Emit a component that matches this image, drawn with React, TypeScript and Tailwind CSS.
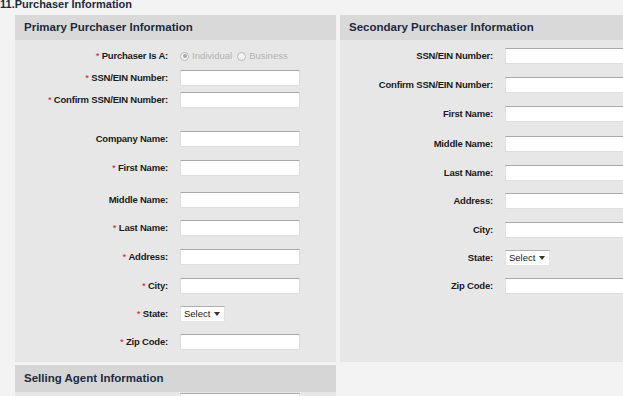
import React from 'react';

type Row = { label: string; req?: boolean; kind?: 'input' | 'select' | 'radio'; mt: string };

const primaryRows: Row[] = [
  { label: 'Purchaser Is A:', req: true, kind: 'radio', mt: 'mt-[5px]' },
  { label: 'SSN/EIN Number:', req: true, mt: 'mt-0' },
  { label: 'Confirm SSN/EIN Number:', req: true, mt: 'mt-0' },
  { label: 'Company Name:', mt: 'mt-[17px]' },
  { label: 'First Name:', req: true, mt: 'mt-[7px]' },
  { label: 'Middle Name:', mt: 'mt-[10px]' },
  { label: 'Last Name:', req: true, mt: 'mt-[6px]' },
  { label: 'Address:', req: true, mt: 'mt-[7px]' },
  { label: 'City:', req: true, mt: 'mt-[7px]' },
  { label: 'State:', req: true, kind: 'select', mt: 'mt-[6px]' },
  { label: 'Zip Code:', req: true, mt: 'mt-[6px]' },
];

const secondaryRows: Row[] = [
  { label: 'SSN/EIN Number:', mt: 'mt-[5px]' },
  { label: 'Confirm SSN/EIN Number:', mt: 'mt-[7px]' },
  { label: 'First Name:', mt: 'mt-[7px]' },
  { label: 'Middle Name:', mt: 'mt-[8px]' },
  { label: 'Last Name:', mt: 'mt-[7px]' },
  { label: 'Address:', mt: 'mt-[6px]' },
  { label: 'City:', mt: 'mt-[7px]' },
  { label: 'State:', kind: 'select', mt: 'mt-[6px]' },
  { label: 'Zip Code:', mt: 'mt-[6px]' },
];

function TextBox() {
  return <div className="h-[16px] w-[120px] shrink-0 bg-white border border-[#dedede] border-t-[#a9a9a9]" />;
}

function SelectBox() {
  return (
    <div className="h-[16px] w-[45px] flex items-center justify-between bg-white border border-[#e2e2e2] border-t-[#b0b0b0] pl-[3px] pr-[4px] text-[9.5px] text-[#222]">
      <span>Select</span>
      <svg width="6" height="4" viewBox="0 0 6 4">
        <path d="M0 0 H6 L3 4 Z" fill="#333" />
      </svg>
    </div>
  );
}

function Radio({ checked }: { checked?: boolean }) {
  return (
    <span className="w-[9px] h-[9px] rounded-full border border-[#b9b9b9] bg-[#f4f4f4] flex items-center justify-center">
      {checked && <span className="w-[4px] h-[4px] rounded-full bg-[#a8a8a8]" />}
    </span>
  );
}

function FormRow({ row }: { row: Row }) {
  return (
    <div className={`flex items-center h-[22px] ${row.mt}`}>
      <div className="w-[153px] shrink-0 text-right text-[9.5px] font-bold tracking-[-0.2px] text-[#1b1b1b] whitespace-nowrap">
        {row.req && <span className="text-[#d01818] font-normal">* </span>}
        {row.label}
      </div>
      <div className="ml-[12px]">
        {row.kind === 'select' ? (
          <SelectBox />
        ) : row.kind === 'radio' ? (
          <div className="flex items-center text-[9.5px] text-[#b3b3b3]">
            <Radio checked />
            <span className="ml-[3px]">Individual</span>
            <span className="ml-[5px]"><Radio /></span>
            <span className="ml-[3px]">Business</span>
          </div>
        ) : (
          <TextBox />
        )}
      </div>
    </div>
  );
}

function Header({ title }: { title: string }) {
  return (
    <div className="h-[25px] flex items-center pl-[9px] bg-[#d9d9d9] text-[11.5px] font-bold text-[#1c2b40]">
      {title}
    </div>
  );
}

export default function App() {
  return (
    <div className="w-[623px] h-[396px] overflow-hidden bg-[#f3f3f3] font-['Liberation_Sans',Arial,sans-serif]">
      <div className="-mt-[1px] h-[11px] text-[11px] leading-[11px] font-bold text-[#1c2b40] whitespace-nowrap">
        11.Purchaser Information
      </div>
      <div className="mt-[5px] ml-[15px] grid grid-cols-[321px_300px] gap-x-[4px]">
        <div className="flex flex-col">
          <Header title="Primary Purchaser Information" />
          <div className="bg-[#e7e7e7] pb-[9px]">
            {primaryRows.map((r) => (
              <FormRow key={r.label} row={r} />
            ))}
          </div>
        </div>
        <div className="flex flex-col">
          <Header title="Secondary Purchaser Information" />
          <div className="flex-1 bg-[#e7e7e7]">
            {secondaryRows.map((r) => (
              <FormRow key={r.label} row={r} />
            ))}
          </div>
        </div>
        <div className="mt-[3px] flex flex-col">
          <div className="h-[27px] flex items-center pl-[9px] bg-[#d6d6d6] text-[11.5px] font-bold text-[#1c2b40]">
            Selling Agent Information
          </div>
          <div className="bg-[#e7e7e7] h-[30px] pt-[1px]">
            <div className="ml-[165px]">
              <TextBox />
            </div>
          </div>
        </div>
      </div>
    </div>
  );
}
